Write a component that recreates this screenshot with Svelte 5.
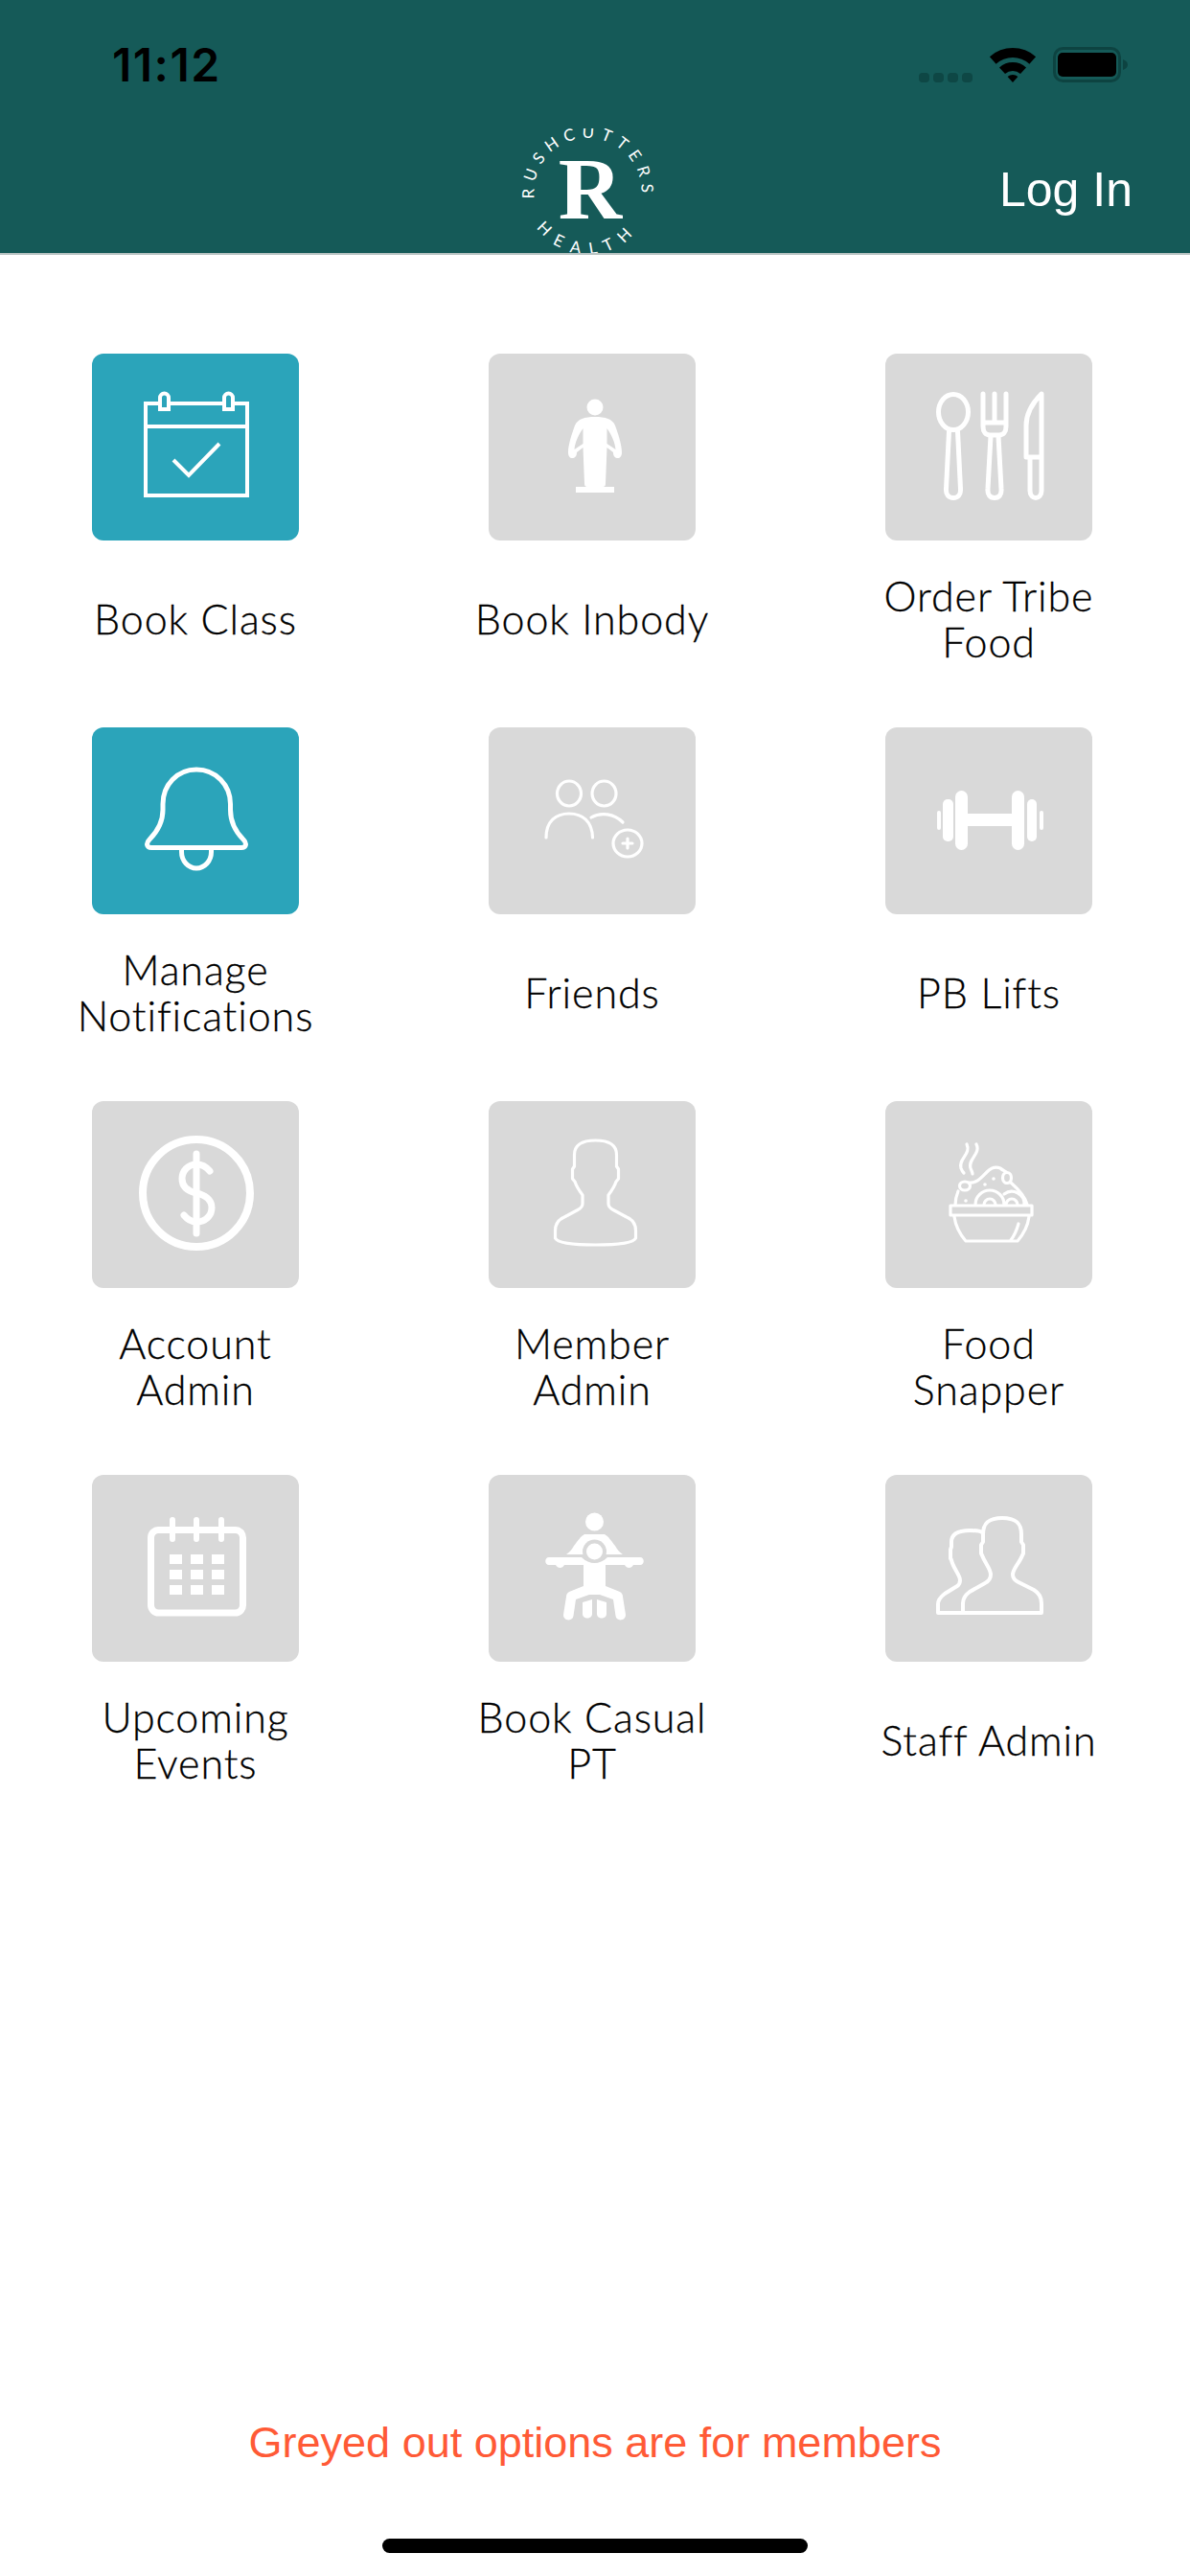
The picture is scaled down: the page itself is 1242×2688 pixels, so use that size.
<script>
    const tiles = [
        { icon: "calendar-check", lines: ["Book Class"], on: true },
        { icon: "person", lines: ["Book Inbody"] },
        { icon: "cutlery", lines: ["Order Tribe", "Food"] },
        { icon: "bell", lines: ["Manage", "Notifications"], on: true },
        { icon: "friends", lines: ["Friends"] },
        { icon: "dumbbell", lines: ["PB Lifts"] },
        { icon: "dollar", lines: ["Account", "Admin"] },
        { icon: "member", lines: ["Member", "Admin"] },
        { icon: "bowl", lines: ["Food", "Snapper"] },
        { icon: "calendar", lines: ["Upcoming", "Events"] },
        { icon: "trainer", lines: ["Book Casual", "PT"] },
        { icon: "staff", lines: ["Staff Admin"] },
    ];
    const gridRows = [83, 99, 115];
    const gridCols = [81, 103, 125];
</script>

<div class="page">
    <header>
        <div class="status">
            <span class="time">11:12</span>
            <div class="status-icons">
                <svg class="signal" width="56" height="10" viewBox="0 0 56 10">
                    <rect x="0" width="11" height="10" rx="4" />
                    <rect x="15" width="11" height="10" rx="4" />
                    <rect x="30" width="11" height="10" rx="4" />
                    <rect x="45" width="11" height="10" rx="4" />
                </svg>
                <svg class="wifi" width="48" height="36" viewBox="0 0 47 36">
                    <path d="M-.6 9.2A36 36 0 0 1 47.6 9.2L40.9 16.7A26 26 0 0 0 6.1 16.7Z" />
                    <path d="M9.5 20.4A21 21 0 0 1 37.5 20.4L31.5 27.1A12 12 0 0 0 15.5 27.1Z" />
                    <path d="M18.1 30.1A8 8 0 0 1 28.9 30.1L23.5 36Z" />
                </svg>
                <svg class="battery" width="78" height="37" viewBox="0 0 78 37">
                    <rect class="battery-case" x="1.5" y="1.5" width="68" height="34" rx="9" />
                    <rect class="battery-level" x="5" y="6" width="61" height="25" rx="5" />
                    <path class="battery-nub" d="M73 13c3 1 5 3 5 5.500s-2 4.500-5 5.500z" />
                </svg>
            </div>
        </div>
        <nav>
            <svg class="logo" width="140" height="130" viewBox="0 0 140 130">
                <defs>
                    <path id="arc-top" d="M70.500 122A56 56 0 1 1 70.500 10A56 56 0 1 1 70.500 122" />
                    <path id="arc-bottom" d="M5.500 66A65 65 0 0 0 135.500 66" />
                </defs>
                <text class="logo-ring" text-anchor="middle">
                    <textPath href="#arc-top" startOffset="50%">RUSHCUTTERS</textPath>
                </text>
                <text class="logo-ring wide" text-anchor="middle">
                    <textPath href="#arc-bottom" startOffset="50%">HEALTH</textPath>
                </text>
                <text class="logo-r" x="73" y="94" text-anchor="middle">R</text>
            </svg>
            <span class="login">Log In</span>
        </nav>
    </header>

    <main class="grid">
        {#each tiles as t}
            <div class="cell">
                <div class="tile" class:on={t.on}>
                    <svg width="216" height="195" viewBox="0 0 216 195">
                        {#if t.icon === "calendar-check"}
                            <g class="line s4 square">
                                <path d="M71 52H56V148H162V52H147M80 52H138" />
                                <path d="M71 58V46a4.500 4.500 0 0 1 9 0V58ZM138 58V46a4.500 4.500 0 0 1 9 0V58Z" />
                                <path d="M56 76H162" />
                                <path d="M85 111L101 127L133 94" />
                            </g>
                        {:else if t.icon === "person"}
                            <circle class="solid" cx="111" cy="56" r="8.500" />
                            <path class="solid" fill-rule="evenodd" d="M111 66C100 66 93 68 90 75C87 83 83 95 83 103C83 107 85 109 87 109C90 109 92 107 92 103L98.500 98L100 136C100 138 101 139 103 139H119C121 139 122 138 122 136L123.500 98L130 103C130 107 132 109 135 109C137 109 139 107 139 103C139 95 135 83 132 75C129 68 122 66 111 66ZM98.500 78C94 84 90 93 89.500 100L98.500 94ZM123.500 78C128 84 132 93 132.500 100L123.500 94Z" />
                            <rect class="solid" x="91" y="139" width="40" height="6" />
                        {:else if t.icon === "cutlery"}
                            <g class="line s5">
                                <ellipse cx="71" cy="61" rx="15.500" ry="18.500" />
                                <path d="M66.500 81L63.500 141C63 147 66 150.500 71 150.500C76 150.500 79 147 78.500 141L75.500 81" />
                                <path d="M102 42V76C102 82 105 85 109 85H119C123 85 126 82 126 76V42M114 42V72M102 72H126" />
                                <path d="M110 86L107 141C106.500 147 109 150.500 114 150.500C119 150.500 121.500 147 121 141L118 86" />
                                <path d="M163 42C155 50 147 60 147 75V108H163ZM151 108V143C151 148 154 150.500 157 150.500C160 150.500 163 148 163 143V108" />
                            </g>
                        {:else if t.icon === "bell"}
                            <g class="line s5">
                                <path d="M109 44C89 44 74 60 74 80V86C74 100 68 109 60 117C56 121 57 125.500 62 125.500H156C161 125.500 162 121 158 117C150 109 144.500 100 144.500 86V80C144.500 60 129 44 109 44Z" />
                                <path d="M93.500 126V130a15.500 17 0 0 0 31 0V126" />
                            </g>
                        {:else if t.icon === "friends"}
                            <g class="line s3">
                                <ellipse cx="84" cy="69" rx="12.500" ry="13" />
                                <ellipse cx="120.500" cy="69" rx="12.500" ry="13" />
                                <path d="M60 115C60 98 70 90 84 90C98 90 108 98 108.500 115" />
                                <path d="M107 94C117 88 131 90 140 99" />
                                <ellipse cx="145" cy="121" rx="15" ry="14" />
                                <path d="M140 121H150M145 116V126" />
                            </g>
                        {:else if t.icon === "dumbbell"}
                            <rect class="solid" x="86" y="90" width="46" height="13" />
                            <rect class="solid" x="73" y="66" width="13" height="62" rx="6.500" />
                            <rect class="solid" x="132" y="66" width="13" height="62" rx="6.500" />
                            <rect class="solid" x="60" y="75" width="11" height="44" rx="5" />
                            <rect class="solid" x="148" y="75" width="10" height="44" rx="5" />
                            <rect class="solid" x="54" y="87" width="4" height="20" rx="2" />
                            <rect class="solid" x="161" y="87" width="4" height="20" rx="2" />
                        {:else if t.icon === "dollar"}
                            <circle class="line s8" cx="109" cy="96" r="56" />
                            <g class="line s7">
                                <path d="M109 55V138" />
                                <path d="M123 73C119 68 114 66 109 66C100 66 94 73 94 81C94 90 100 94 109 96C118 98 125 103 125 111C125 120 118 126 109 126C104 126 100 124 96 119" />
                            </g>
                        {:else if t.icon === "member"}
                            <path class="line s3" d="M111.500 41C97 41 89.500 46 89.500 56V68L87.500 71V81L90 84C92 90 95 94 98 98V107C98 110 96 112 93 113.500L79 121C72 124 69.500 129 69.500 135V143C72 148 90 150 111.500 150C133 150 151 148 153.500 143V135C153.500 129 151 124 144 121L130 113.500C127 112 125 110 125 107V98C128 94 131 90 133 84L135.500 81V71L133.500 68V56C133.500 46 126 41 111.500 41Z" />
                        {:else if t.icon === "bowl"}
                            <g class="line s3">
                                <rect x="68" y="109" width="85" height="10" />
                                <path d="M72 120C73 130 78 139 84 146H138C144 139 149 130 150 120" />
                                <path d="M139 128C137 135 135 140 131 145" />
                                <path d="M85 45C90 55 76 60 79 70C80 73 81 74 82 75" />
                                <path d="M95 45C100 55 86 60 89 70C90 73 91 74 91 76" />
                                <path d="M87 85C96 86 101 79 106 74C110 70 115 68 120 70C122 72 125 73 126 74" />
                                <ellipse cx="83" cy="88.500" rx="5.500" ry="4.500" />
                                <ellipse cx="127" cy="80" rx="4.500" ry="5.500" />
                                <path d="M76 94C74 99 73 104 73 108" />
                                <path d="M131 85C139 92 146 100 148 108" />
                                <path d="M94 108A15 15 0 0 1 124 108" />
                                <path d="M103 108A6 6 0 0 1 115 108" />
                                <path d="M124 97A13 13 0 0 1 145 108" />
                                <path d="M126 108A6 6 0 0 1 138 108" />
                            </g>
                            <circle class="solid" cx="84" cy="104" r="1.800" />
                            <circle class="solid" cx="104" cy="87" r="1.800" />
                            <circle class="solid" cx="113" cy="81" r="1.800" />
                        {:else if t.icon === "calendar"}
                            <rect class="line s7" x="61.500" y="57.500" width="96" height="86.500" rx="8" />
                            <g class="line s6">
                                <path d="M84 47V67M109 47V67M135 47V67" />
                            </g>
                            {#each gridRows as y}
                                {#each gridCols as x}
                                    <rect class="solid" {x} {y} width="13" height="10" />
                                {/each}
                            {/each}
                        {:else if t.icon === "trainer"}
                            <circle class="solid" cx="110.500" cy="49" r="9.500" />
                            <path class="solid" d="M100 62H121C125 64 128 69 132 74C134 78 137 81 140 83H81C84 81 87 78 89 74C93 69 96 64 100 62Z" />
                            <circle class="cut" cx="110.500" cy="80" r="12.500" />
                            <path class="solid" d="M63 86H97C101 90 106 92 110.500 92C115 92 120 90 124 86H158C163 86 163 94 158 94H151C149 98 144 98 142 94H122V116L137 122C139 123 140 125 140 127L143 146C143 153 133 153 132.500 147L130 130L116 125H105L91 130L88.500 147C88 153 78 153 78 146L81 127C81 125 82 123 84 122L99 116V94H79C77 98 72 98 70 94H63C58 94 58 86 63 86Z" />
                            <circle class="solid" cx="110.500" cy="80" r="8.500" />
                            <path class="solid" d="M98 133L108 130V145C108 151 98 151 98 145ZM123 133L113 130V145C113 151 123 151 123 145Z" />
                        {:else if t.icon === "staff"}
                            <path class="line s4" d="M81 144V134C81 128 84 125 88 122L104 113C108 111 110 108 110 104C110 98 104 92 101 84L100 82V73L102 70V62C102 50 108 45 122 45C136 45 142 50 142 62V70L144 73V82L143 84C140 92 133 98 133 104C133 108 135 110 139 112L155 120C160 123 163 128 163 134V144H55V135C55 130 58 127 62 124L75 116C78 114 78 112 78 110C78 104 71 98 69 89L68 87V78L69 75V70C69 62 76 58 88 58C94 58 98 58 101 60" />
                        {/if}
                    </svg>
                </div>
                <div class="label">
                    {#each t.lines as line}
                        <span>{line}</span>
                    {/each}
                </div>
            </div>
        {/each}
    </main>

    <footer>
        <p class="note">Greyed out options are for members</p>
        <div class="home-bar"></div>
    </footer>
</div>

<style>
    :global(body) {
        margin: 0;
        background: #fff;
    }
    .page {
        width: 1242px;
        height: 2688px;
        display: flex;
        flex-direction: column;
        font-family: "Liberation Sans", sans-serif;
    }
    header {
        height: 264px;
        background: #155a58;
        border-bottom: 2px solid #b9c4c3;
        display: flex;
        flex-direction: column;
    }
    .status {
        height: 134px;
        box-sizing: border-box;
        padding: 49px 65px 0 117px;
        display: flex;
        justify-content: space-between;
        align-items: flex-start;
    }
    .time {
        font-family: Inter, sans-serif;
        font-weight: 600;
        font-size: 48px;
        line-height: 37px;
        letter-spacing: 1.500px;
        color: #000;
    }
    .status-icons {
        display: flex;
        align-items: flex-end;
        gap: 18px;
    }
    .status-icons svg {
        display: block;
        overflow: visible;
    }
    .signal {
        fill: #0e4745;
    }
    .wifi {
        fill: #000;
    }
    .battery-case {
        fill: none;
        stroke: #0d4341;
        stroke-width: 3;
    }
    .battery-level {
        fill: #000;
    }
    .battery-nub {
        fill: #0d4341;
    }
    nav {
        height: 130px;
        padding-left: 543px;
        padding-right: 60px;
        display: flex;
        align-items: flex-start;
    }
    .logo {
        display: block;
        overflow: hidden;
    }
    .logo-ring {
        font-family: Lato, sans-serif;
        font-size: 17px;
        letter-spacing: 6.500px;
        fill: #fff;
    }
    .logo-ring.wide {
        letter-spacing: 10px;
    }
    .logo-r {
        font-family: "Liberation Serif", serif;
        font-weight: 700;
        font-size: 92px;
        fill: #fff;
    }
    .login {
        margin-left: auto;
        margin-top: 34px;
        font-size: 50px;
        line-height: 60px;
        color: #fff;
    }
    .grid {
        padding: 103px 0 0 96px;
        display: grid;
        grid-template-columns: repeat(3, 216px);
        grid-auto-rows: 390px;
        column-gap: 198px;
    }
    .cell {
        display: flex;
        flex-direction: column;
        align-items: center;
    }
    .tile {
        width: 216px;
        height: 195px;
        flex: none;
        border-radius: 12px;
        background: #d9d9d9;
    }
    .tile.on {
        background: #2ba4ba;
    }
    .tile svg {
        display: block;
    }
    .line {
        fill: none;
        stroke: #fff;
        stroke-linecap: round;
        stroke-linejoin: round;
    }
    .square {
        stroke-linecap: butt;
        stroke-linejoin: miter;
    }
    .solid {
        fill: #fff;
    }
    .cut {
        fill: #d9d9d9;
    }
    .s3 {
        stroke-width: 3.200px;
    }
    .s4 {
        stroke-width: 4px;
    }
    .s5 {
        stroke-width: 5px;
    }
    .s6 {
        stroke-width: 6px;
    }
    .s7 {
        stroke-width: 7px;
    }
    .s8 {
        stroke-width: 8px;
    }
    .label {
        height: 164px;
        display: flex;
        flex-direction: column;
        align-items: center;
        justify-content: center;
        font-family: Lato, sans-serif;
        font-weight: 300;
        font-size: 43px;
        line-height: 48px;
        letter-spacing: 0.9px;
        color: #000;
        -webkit-text-stroke: 0.3px #000;
        white-space: nowrap;
    }
    footer {
        margin-top: auto;
        display: flex;
        flex-direction: column;
        align-items: center;
    }
    .note {
        margin: 0 0 74px;
        font-size: 45px;
        line-height: 52px;
        color: #ff5a36;
    }
    .home-bar {
        width: 444px;
        height: 15px;
        margin-bottom: 24px;
        border-radius: 8px;
        background: #000;
    }
</style>
